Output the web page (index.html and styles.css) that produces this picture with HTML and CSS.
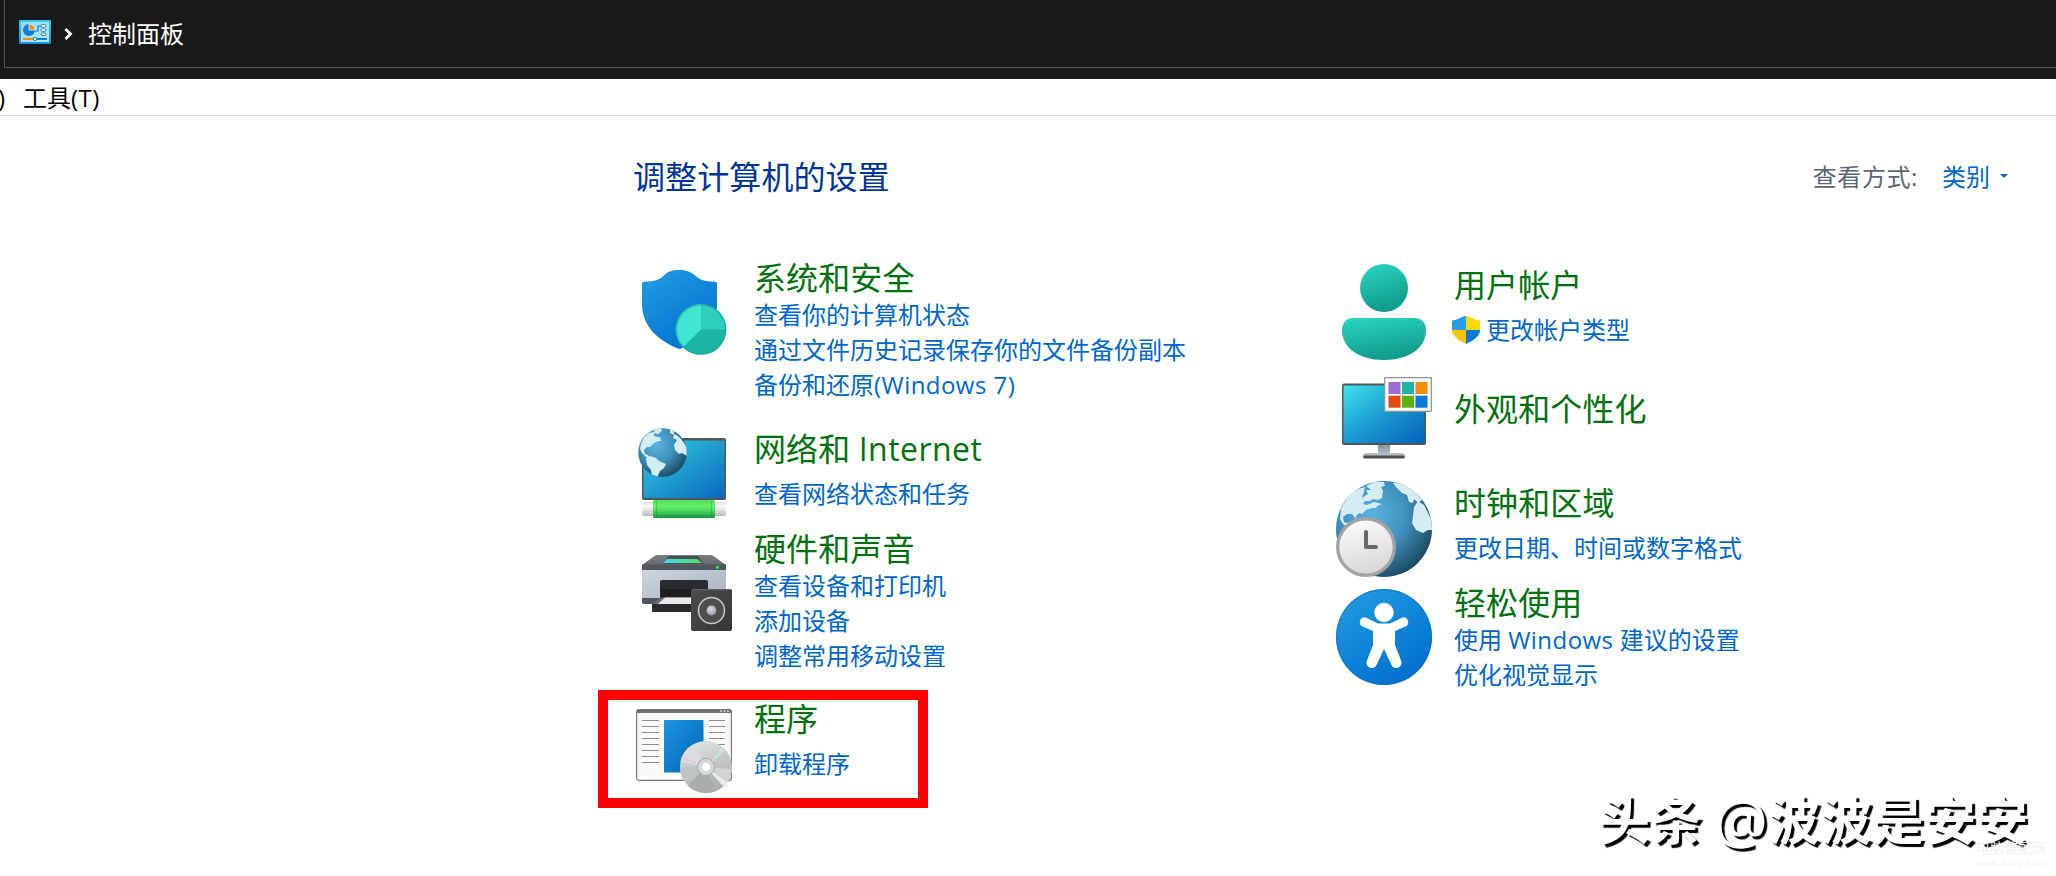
FILE: index.html
```html
<!DOCTYPE html>
<html lang="zh-CN">
<head>
<meta charset="utf-8">
<title>控制面板</title>
<link rel="stylesheet" href="styles.css">
</head>
<body>
<header class="titlebar">
  <div class="address">
    <svg class="cp-icon" viewBox="0 0 32 24">
      <defs>
        <linearGradient id="cpf" x1="0" y1="0" x2="0" y2="1"><stop offset="0" stop-color="#3fc8f5"/><stop offset="1" stop-color="#1490df"/></linearGradient>
        <linearGradient id="cpi" x1="0" y1="0" x2="1" y2="1"><stop offset="0" stop-color="#8fdcf8"/><stop offset="1" stop-color="#b9e8fa"/></linearGradient>
      </defs>
      <rect width="32" height="24" rx="1.2" fill="url(#cpf)"/>
      <rect x="2" y="2" width="28" height="20" fill="url(#cpi)"/>
      <circle cx="10" cy="10" r="6" fill="#0f7fd6"/>
      <path d="M10 10V4a6 6 0 0 1 6 6z" fill="#f28c0a" stroke="#e8f7fd" stroke-width=".8"/>
      <path d="M16 11h3V6h3M24 10h3" fill="none" stroke="#1478c8" stroke-width="1.2"/>
      <g fill="#fff" stroke="#1478c8" stroke-width=".9"><rect x="22" y="4.500" width="5" height="2.600" rx="1.200"/><rect x="22" y="8.700" width="5" height="2.600" rx="1.200"/><rect x="22" y="12.900" width="5" height="2.600" rx="1.200"/></g>
      <path d="M4 19h11" stroke="#f28c0a" stroke-width="2"/><path d="M17 19h11" stroke="#0f7fd6" stroke-width="2"/>
      <circle cx="16" cy="19" r="1.600" fill="#fff" stroke="#0f7fd6"/>
    </svg>
    <svg class="chevron" viewBox="0 0 8 12"><path d="M1.500 1l5 5-5 5" fill="none" stroke="#fff" stroke-width="2.800"/></svg>
    <span class="crumb">控制面板</span>
  </div>
</header>
<nav class="menubar"><span class="menu-cut">)</span><span>工具<span class="latin">(T)</span></span></nav>
<main class="content">
  <div class="top">
    <h1>调整计算机的设置</h1>
    <div class="view"><span class="view-label">查看方式:</span><a class="view-value">类别</a><i class="caret"></i></div>
  </div>
  <div class="columns">
    <div class="column left">
      <section class="category security">
        <svg class="icon" viewBox="0 0 96 96">
          <defs>
            <linearGradient id="sh" x1="0" y1="0" x2=".6" y2="1"><stop offset="0" stop-color="#219fe3"/><stop offset="1" stop-color="#0271cf"/></linearGradient>
          </defs>
          <path d="M6 19.500Q6 17.800 8 17.800C19 17.500 24 15.500 29 10.500C32 7.500 36 6 43 6C50 6 54 7.500 58 10.500C63 15.500 68 17.500 79 17.800Q81 17.800 81 19.500V40C81 62 67 75 45 84.500Q43.500 85.300 42 84.500C19 75 6 60 6 40z" fill="url(#sh)"/>
          <circle cx="65" cy="65.500" r="25.300" fill="#1cb5a3"/>
          <path d="M65 65.500L47 83.300A25.300 25.300 0 0 1 65 40.200z" fill="#40e6d2"/>
          <path d="M65 65.500V40.200A25.300 25.300 0 0 1 90.300 65.500z" fill="#2dcfba"/>
          <circle cx="65" cy="65.500" r="24.600" fill="none" stroke="#169f92" stroke-opacity=".55" stroke-width="1.400"/>
        </svg>
        <div class="body"><h2>系统和安全</h2><a>查看你的计算机状态</a><a>通过文件历史记录保存你的文件备份副本</a><a>备份和还原<span class="latin">(Windows 7)</span></a></div>
      </section>
      <section class="category network spaced">
        <svg class="icon" viewBox="0 0 96 96">
          <defs>
            <linearGradient id="scr" x1="0" y1="0" x2="1" y2="1"><stop offset="0" stop-color="#35cfdf"/><stop offset="1" stop-color="#0868be"/></linearGradient>
            <linearGradient id="grn" x1="0" y1="0" x2="0" y2="1"><stop offset="0" stop-color="#55dd5e"/><stop offset=".35" stop-color="#66f06e"/><stop offset=".6" stop-color="#4cd75b"/><stop offset="1" stop-color="#159243"/></linearGradient>
            <linearGradient id="cbl" x1="0" y1="0" x2="0" y2="1"><stop offset="0" stop-color="#ddd"/><stop offset=".3" stop-color="#fafafa"/><stop offset="1" stop-color="#b8b8b8"/></linearGradient>
            <radialGradient id="glb" cx=".38" cy=".35" r=".7"><stop offset="0" stop-color="#59b4e0"/><stop offset=".5" stop-color="#3f92bd"/><stop offset="1" stop-color="#1c475f"/></radialGradient>
            <clipPath id="gc"><circle cx="26.500" cy="25.500" r="24.300"/></clipPath>
          </defs>
          <rect x="6" y="11" width="84" height="62" rx="2" fill="#50565b"/>
          <rect x="7.500" y="13.500" width="81" height="57.500" fill="url(#scr)"/>
          <rect x="6" y="75" width="84" height="14" rx="1.500" fill="url(#cbl)"/>
          <rect x="17" y="73" width="62" height="18" rx="1.500" fill="url(#grn)"/>
          <path d="M20.500 74v16M75.500 74v16" stroke="#0c8a3b" stroke-opacity=".35"/>
          <circle cx="26.500" cy="25.500" r="24.300" fill="url(#glb)"/>
          <g clip-path="url(#gc)" fill="#d3edf2">
            <path d="M5 17L8 10L13 6L18 5L18 9L22 10L23 14L20 15L17 17L14 20L11 20L8 23L9 27L12 28L14 31L10 30L6 26L4 22z"/>
            <path d="M18 3L25 1L26 4L22 7L18 6zM19 11L24 10L25 14L20 14z"/>
            <path d="M10 31L14 29L20 31L23 34L30 37L28 41L24 44L21 51L16 49L15 43L11 38z"/>
            <path d="M34 2L38 4L38 7L42 9L45 12L51 20V29L46 26L43 27L39 23L38 18L41 13L37 11L38 8L34 6z"/>
          </g>
        </svg>
        <div class="body"><h2>网络和 <span class="latin">Internet</span></h2><a>查看网络状态和任务</a></div>
      </section>
      <section class="category hardware">
        <svg class="icon" viewBox="0 0 96 96">
          <defs>
            <linearGradient id="lid" x1="0" y1="0" x2="0" y2="1"><stop offset="0" stop-color="#7b8085"/><stop offset="1" stop-color="#565c61"/></linearGradient>
            <linearGradient id="prn" x1="0" y1="0" x2="1" y2="1"><stop offset="0" stop-color="#cdd5de"/><stop offset="1" stop-color="#a5b1bf"/></linearGradient>
            <linearGradient id="lcd" x1="0" y1="0" x2="1" y2="0"><stop offset="0" stop-color="#48d8f0"/><stop offset="1" stop-color="#55dd5e"/></linearGradient>
            <linearGradient id="spk" x1="0" y1="0" x2="1" y2="1"><stop offset="0" stop-color="#4d4d4e"/><stop offset="1" stop-color="#363535"/></linearGradient>
            <radialGradient id="cone" cx=".4" cy=".35" r=".7"><stop offset="0" stop-color="#dce2e9"/><stop offset="1" stop-color="#8e97a2"/></radialGradient>
          </defs>
          <path d="M20 10H76L90 20V25H6V20z" fill="url(#lid)"/>
          <path d="M6 19.500H90V25H6z" fill="#50565b"/>
          <path d="M32 11H62L68 19H27z" fill="#4a5055"/><path d="M31 14H61L66 18H27z" fill="url(#lcd)"/>
          <circle cx="81.500" cy="22.200" r="1.600" fill="#38e838"/>
          <path d="M6 25H90V58H6z" fill="url(#prn)"/>
          <path d="M6 53H25V59H8Q6 59 6 57z" fill="#50565b"/>
          <path d="M24 37Q24 35 26 35H70Q72 35 72 37V53H24z" fill="#292c2f"/><path d="M25 44H71V53H25z" fill="#1c1e20"/>
          <path d="M16 59L25 52.500H75V60H16z" fill="#6a7076"/><path d="M22 59L29 52.500H70V59z" fill="#eee9e9"/>
          <rect x="16" y="59" width="60" height="8" rx="1" fill="#292c2f"/>
          <rect x="55" y="44" width="41" height="42" rx="2" fill="url(#spk)"/><path d="M56 44.700H95" stroke="#6b6b6b"/>
          <circle cx="75.500" cy="65.500" r="13" fill="#4e4e4f" stroke="#c2cad2" stroke-width="1.500"/><circle cx="75.500" cy="65.500" r="4.900" fill="url(#cone)"/>
        </svg>
        <div class="body"><h2>硬件和声音</h2><a>查看设备和打印机</a><a>添加设备</a><a>调整常用移动设置</a></div>
      </section>
      <section class="category programs spaced">
        <svg class="icon" viewBox="0 0 96 96">
          <defs>
            <linearGradient id="app" x1="0" y1="0" x2="1" y2="1"><stop offset="0" stop-color="#1997df"/><stop offset="1" stop-color="#0562b5"/></linearGradient>
            <linearGradient id="disc" x1=".3" y1="0" x2=".6" y2="1"><stop offset="0" stop-color="#dfe4e4"/><stop offset=".5" stop-color="#c2c5c5"/><stop offset="1" stop-color="#a9acac"/></linearGradient>
          </defs>
          <rect x=".6" y="7.600" width="94.800" height="70.800" rx="2.500" fill="#fafafa" stroke="#787b78" stroke-width="1.200"/>
          <path d="M.5 11V10Q.5 7 3 7H93Q95.500 7 95.500 10V11z" fill="#70736f"/>
          <path d="M84 9h2m1.500 0h2m1.500 0h2" stroke="#d5d5d5" stroke-width="1.300"/>
          <path d="M6 18.500H23M6 24.500H23M6 30.500H23M6 36.500H23M6 42.500H23M6 48.500H23M6 54.500H23M6 60.500H23M73 18.500H89M73 24.500H89M73 30.500H89M73 36.500H89M73 42.500H89" stroke="#8b8e8b"/>
          <rect x="28" y="18" width="39.500" height="52.500" rx=".8" fill="url(#app)"/>
          <circle cx="70" cy="65" r="26" fill="url(#disc)"/>
          <path d="M70 65L44.500 60A26 26 0 0 1 57 42.500z" fill="#d9dddd"/><path d="M70 65L50 81A26 26 0 0 1 44 65z" fill="#bfc3c3"/>
          <path d="M70 65L95.900 67A26 26 0 0 1 88 84z" fill="#d3d3d3"/><path d="M70 65L80 89A26 26 0 0 1 52 83.700z" fill="#a9acac"/>
          <path d="M70 65L45 57L46.500 54z" fill="#ecc2ec"/><path d="M70 65L86 45.500L89 48.500z" fill="#c4e8d3"/><path d="M70 65L91 80L87 84z" fill="#ececec"/>
          <circle cx="70" cy="65" r="8.500" fill="#d4d8d8" stroke="#a4a8a8"/><circle cx="70" cy="65" r="4" fill="#fff"/>
        </svg>
        <div class="body"><h2>程序</h2><a>卸载程序</a></div>
        <div class="highlight"></div>
      </section>
    </div>
    <div class="column right">
      <section class="category accounts spaced">
        <svg class="icon" viewBox="0 0 96 96">
          <defs><linearGradient id="usr" x1=".3" y1="0" x2=".6" y2="1"><stop offset="0" stop-color="#27d2bd"/><stop offset="1" stop-color="#0f9788"/></linearGradient></defs>
          <circle cx="48" cy="24" r="24" fill="url(#usr)"/>
          <path d="M17 54H79C86 54 90 59 90 66C90 84 73 96 48 96C23 96 6 84 6 66C6 59 10 54 17 54z" fill="url(#usr)"/>
        </svg>
        <div class="body"><h2>用户帐户</h2><a class="uac"><svg class="uac-icon" viewBox="0 0 28 28">
          <path d="M14 0V14H0V4.500C6 4.500 9 0 14 0z" fill="#25a0e4"/><path d="M14 0C19 0 22 4.500 28 4.500V14H14z" fill="#fdda05"/>
          <path d="M0 14H14V28C6 24 0 20 0 14z" fill="#fdc705"/><path d="M28 14H14V28C22 24 28 20 28 14z" fill="#087bd6"/></svg>更改帐户类型</a></div>
      </section>
      <section class="category appearance">
        <svg class="icon" viewBox="0 0 96 96">
          <defs>
            <linearGradient id="mon" x1="0" y1="0" x2="1" y2="1"><stop offset="0" stop-color="#40e4e8"/><stop offset=".5" stop-color="#1a9ad0"/><stop offset="1" stop-color="#0561b9"/></linearGradient>
            <linearGradient id="std" x1="0" y1="0" x2="0" y2="1"><stop offset="0" stop-color="#838c97"/><stop offset="1" stop-color="#b4bdc8"/></linearGradient>
          </defs>
          <rect x="42" y="74" width="12" height="11" fill="url(#std)"/><path d="M29 83H67L69 85V88H27V85z" fill="#b4bdc8"/><path d="M27.500 85.500H68.500V88.500H27.500z" fill="#494e53"/>
          <rect x="6" y="13.500" width="84" height="61.500" rx="2" fill="#50565b"/><rect x="7.500" y="15.500" width="81" height="57.500" fill="url(#mon)"/>
          <rect x="48.600" y="7.700" width="46.800" height="33.600" rx=".8" fill="#fafafa" stroke="#949494" stroke-width="1.300"/>
          <rect x="52.500" y="12" width="12" height="12" fill="#9c6dd2"/><rect x="66" y="12" width="12" height="12" fill="#18b3a2"/><rect x="79.500" y="12" width="12" height="12" fill="#f28c0a"/>
          <rect x="52.500" y="25.700" width="12" height="12" fill="#e24c10"/><rect x="66" y="25.700" width="12" height="12" fill="#59b50d"/><rect x="79.500" y="25.700" width="12" height="12" fill="#087bd6"/>
        </svg>
        <div class="body"><h2>外观和个性化</h2></div>
      </section>
      <section class="category clock spaced">
        <svg class="icon" viewBox="0 0 96 96">
          <defs>
            <linearGradient id="dial" x1="0" y1="0" x2=".3" y2="1"><stop offset="0" stop-color="#fff"/><stop offset="1" stop-color="#d9d9d9"/></linearGradient>
            <clipPath id="cc"><circle cx="48" cy="48" r="48"/></clipPath>
          </defs>
          <circle cx="48" cy="48" r="48" fill="url(#glb)"/>
          <g clip-path="url(#cc)" fill="#d3edf2">
            <path d="M4 38L5 27L14 13L22 8L29 6L28 11L26 16L29 20L27 23L31 24L38 21L46 23L41 25L40 27L36 27L30 29L26 33L23 32L20 35L20 38L16 33L11 33L7 36L8 41L11 42L14 41L14 46L18 49L12 47L7 43z"/>
            <path d="M30 5L38 1L48 1L49 5L45 6L47 10L46 17L42 19L37 18L34 20L28 20L27 16L32 13L30 9L35 9z"/>
            <path d="M57 2L64 2L72 6L80 12L86 19L82 22L78 18L77 22L73 21L71 14L66 12L60 6z"/>
            <path d="M78 26L82 20L88 24L96 40V49L92 49L87 52L80 49L76 42L77 35z"/>
          </g>
          <circle cx="30" cy="66" r="28.300" fill="url(#dial)" stroke="#a3a3a3" stroke-width="3.400"/>
          <path d="M30 51V66H40" fill="none" stroke="#686868" stroke-width="4" stroke-linecap="round" stroke-linejoin="round"/>
        </svg>
        <div class="body"><h2>时钟和区域</h2><a>更改日期、时间或数字格式</a></div>
      </section>
      <section class="category ease">
        <svg class="icon" viewBox="0 0 96 96">
          <circle cx="48" cy="48" r="48" fill="url(#sh)"/><circle cx="48" cy="48" r="47.300" fill="none" stroke="#086bbd" stroke-opacity=".5" stroke-width="1.400"/>
          <circle cx="48" cy="23.500" r="9.700" fill="#fff"/>
          <path d="M37 42V56L31 71.500A5 5 0 0 0 40.500 76L48 60L55.500 76A5 5 0 0 0 65 71.500L59 56V42L70.500 37A5 5 0 0 0 67 28.300L54 34.500H42L29 28.300A5 5 0 0 0 25.500 37z" fill="#fff"/>
        </svg>
        <div class="body"><h2>轻松使用</h2><a>使用 <span class="latin">Windows</span> 建议的设置</a><a>优化视觉显示</a></div>
      </section>
    </div>
  </div>
</main>
<div class="watermark"><span>头条</span><span class="at">@</span><span>波波是安安</span></div>
<div class="site-mark"><span>电脑装配网</span><small>www.dnzp.com</small></div>
</body>
</html>
```
FILE: styles.css
```css
* { box-sizing: border-box; }
body { margin: 0; width: 2056px; height: 876px; position: relative; overflow: hidden; background: #fff; font: 24px/35px "Open Sans", "Noto Sans CJK SC", sans-serif; color: #000; }
h1, h2 { margin: 0; padding-top: 2px; font-size: 32px; line-height: 38px; font-weight: 400; white-space: nowrap; letter-spacing: .1px; }
h1 { color: #003399; }
h2 { color: #007010; }
a { color: #0066cc; white-space: nowrap; }
svg { display: block; flex: none; overflow: visible; }
.latin { letter-spacing: .45px; }
.titlebar { height: 79px; background: #191919; padding-left: 4px; }
.address { height: 68px; border-left: 1px solid #555; border-bottom: 1px solid #555; display: flex; align-items: center; padding-left: 14px; color: #fff; }
.cp-icon { width: 32px; height: 24px; margin-top: -3px; }
.chevron { width: 8px; height: 12px; margin: 1px 16px 0 13px; }
.menubar { height: 37px; border-bottom: 1px solid #dcdcdc; display: flex; align-items: center; }
.menu-cut { width: 23px; text-indent: -2px; }
.top { display: flex; justify-content: space-between; align-items: center; height: 40px; margin-top: 40px; padding: 0 48px 0 633px; }
.view { display: flex; align-items: center; color: #5a6678; }
.view-label { letter-spacing: .6px; }
.view-value { margin-left: 24px; }
.caret { margin: -1px 0 0 10px; border: 4px solid transparent; border-top: 4px solid #0066cc; border-bottom: 0; }
.columns { display: grid; grid-template-columns: 700px 1fr; padding: 61px 0 0 636px; }
.column { display: grid; align-content: start; }
.left { grid-template-rows: 171px 100px 170px 110px; }
.right { padding-top: 7px; grid-template-rows: 106px 111px 102px 110px; }
.category { display: flex; align-items: flex-start; gap: 22px; position: relative; }
.icon { width: 96px; height: 96px; }
.body { display: flex; flex-direction: column; }
.spaced h2 { margin-bottom: 8px; }
.security .icon { margin-top: 7px; }
.network .icon { margin-top: -1px; }
.hardware .icon { margin-top: 17px; }
.programs .icon { margin-top: 4px; }
.appearance .body { padding-top: 18px; }
.clock .body { padding-top: 1px; }
.ease .icon { margin-top: 6px; }
.ease .body { margin-top: -1px; }
.uac { display: flex; align-items: center; gap: 6px; margin-left: -2px; }
.uac-icon { width: 28px; height: 28px; }
.highlight { position: absolute; left: -38px; top: -8px; width: 330px; height: 118px; border: 10px solid #f00; }
.watermark { position: absolute; left: 1598px; top: 785px; display: flex; align-items: center; font-size: 52px; line-height: 70px; font-weight: 700; color: #fff; text-shadow: 3px 3px 1px #000; white-space: nowrap; }
.at { width: 54px; margin-left: 12px; font-size: 60px; font-weight: 400; }
.site-mark { position: absolute; left: 1976px; top: 838px; width: 72px; display: flex; flex-direction: column; color: #f1f1f1; font-size: 14px; line-height: 20px; white-space: nowrap; }
.site-mark small { font-size: 9px; line-height: 9px; letter-spacing: .5px; }
```
